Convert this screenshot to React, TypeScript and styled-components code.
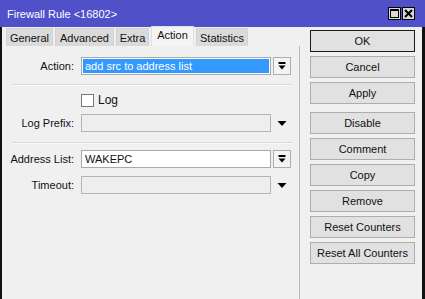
import styled, { createGlobalStyle } from "styled-components";

const GlobalStyle = createGlobalStyle`
  html, body {
    margin: 0;
    padding: 0;
    background: #f0f0f0;
  }
  body {
    font-family: "Liberation Sans", Arial, sans-serif;
    font-size: 11px;
    color: #111;
  }
`;

const tabs = [
  { name: "General", w: 47 },
  { name: "Advanced", w: 59 },
  { name: "Extra", w: 33 },
  { name: "Action", w: 43, active: true },
  { name: "Statistics", w: 52 },
];

const buttons = [
  { label: "OK", primary: true },
  { label: "Cancel" },
  { label: "Apply", groupEnd: true },
  { label: "Disable" },
  { label: "Comment" },
  { label: "Copy" },
  { label: "Remove" },
  { label: "Reset Counters" },
  { label: "Reset All Counters" },
];

function BarArrow() {
  return (
    <svg width="8" height="8" viewBox="0 0 8 8">
      <rect x="0.5" y="0" width="7" height="2" fill="#000" />
      <polygon points="0.5,3.5 7.5,3.5 4,7.5" fill="#000" />
    </svg>
  );
}

function DownArrow() {
  return (
    <svg width="10" height="5" viewBox="0 0 10 5">
      <polygon points="0.5,0 9.5,0 5,5" fill="#000" />
    </svg>
  );
}

function App() {
  return (
    <>
      <GlobalStyle />
      <Window>
        <TitleBar>
          <Title>Firewall Rule &lt;16802&gt;</Title>
          <Controls>
            <ControlBox>
              <svg width="9" height="9" viewBox="0 0 9 9">
                <rect x="0.5" y="0.5" width="8" height="8" fill="none" stroke="#000" />
                <rect x="0" y="0" width="9" height="2" fill="#000" />
              </svg>
            </ControlBox>
            <ControlBox>
              <svg width="9" height="9" viewBox="0 0 9 9">
                <path d="M1 1 L8 8 M8 1 L1 8" stroke="#000" strokeWidth="2" />
              </svg>
            </ControlBox>
          </Controls>
        </TitleBar>
        <Body>
          <Main>
            <TabStrip>
              {tabs.map((t) => (
                <Tab key={t.name} $w={t.w} $active={!!t.active}>
                  {t.name}
                </Tab>
              ))}
            </TabStrip>
            <Pane>
              <Row $mt={0}>
                <Label>Action:</Label>
                <Field $kind="selected">add src to address list</Field>
                <DropButton>
                  <BarArrow />
                </DropButton>
              </Row>
              <Separator $mt={9} />
              <Row $mt={5}>
                <Label />
                <Checkbox />
                <CheckText>Log</CheckText>
              </Row>
              <Row $mt={5}>
                <Label>Log Prefix:</Label>
                <Field $kind="disabled" />
                <ArrowSlot>
                  <DownArrow />
                </ArrowSlot>
              </Row>
              <Separator $mt={10} />
              <Row $mt={6}>
                <Label>Address List:</Label>
                <Field $kind="normal">WAKEPC</Field>
                <DropButton>
                  <BarArrow />
                </DropButton>
              </Row>
              <Row $mt={8}>
                <Label>Timeout:</Label>
                <Field $kind="disabled" />
                <ArrowSlot>
                  <DownArrow />
                </ArrowSlot>
              </Row>
            </Pane>
          </Main>
          <ButtonColumn>
            {buttons.map((b) => (
              <Button key={b.label} $primary={!!b.primary} $gapAfter={b.groupEnd ? 8 : 4}>
                {b.label}
              </Button>
            ))}
          </ButtonColumn>
        </Body>
      </Window>
    </>
  );
}

export default App;

const Window = styled.div`
  width: 425px;
  height: 299px;
  display: flex;
  flex-direction: column;
  overflow: hidden;
`;

const TitleBar = styled.div`
  height: 27px;
  flex-shrink: 0;
  background: #5050c8;
  display: flex;
  align-items: center;
  justify-content: space-between;
  padding: 0 10px 0 7px;
`;

const Title = styled.span`
  color: #fff;
  font-size: 11px;
`;

const Controls = styled.div`
  display: flex;
  gap: 1px;
`;

const ControlBox = styled.div`
  width: 13px;
  height: 13px;
  box-sizing: border-box;
  border: 1px solid #000;
  background: #d8d8d8;
  display: flex;
  align-items: center;
  justify-content: center;
`;

const Body = styled.div`
  flex: 1;
  display: flex;
  border-left: 2px solid #111;
  border-right: 3px solid #111;
  background: #f0f0f0;
`;

const Main = styled.div`
  width: 298px;
  display: flex;
  flex-direction: column;
`;

const TabStrip = styled.div`
  height: 19px;
  display: flex;
  align-items: flex-end;
  gap: 2px;
  padding-left: 4px;
`;

const Tab = styled.div<{ $w: number; $active: boolean }>`
  width: ${(p) => p.$w}px;
  height: ${(p) => (p.$active ? 20 : 18)}px;
  box-sizing: border-box;
  display: flex;
  align-items: center;
  justify-content: center;
  background: ${(p) => (p.$active ? "#f4f4f4" : "#dadada")};
  border: 1px solid ${(p) => (p.$active ? "#e0e0e0" : "#d2d2d2")};
  border-bottom: none;
  padding-bottom: ${(p) => (p.$active ? 3 : 0)}px;
`;

const Pane = styled.div`
  flex: 1;
  margin-left: 2px;
  border-right: 1px solid #b8b8b8;
  display: flex;
  flex-direction: column;
  padding-top: 11px;
`;

const Row = styled.div<{ $mt: number }>`
  height: 18px;
  margin-top: ${(p) => p.$mt}px;
  display: flex;
  align-items: center;
`;

const Label = styled.div`
  width: 70px;
  margin-right: 7px;
  text-align: right;
  white-space: nowrap;
`;

const Field = styled.div<{ $kind: "selected" | "normal" | "disabled" }>`
  width: 190px;
  height: 18px;
  box-sizing: border-box;
  padding: 0 3px;
  display: flex;
  align-items: center;
  border: 1px solid ${(p) => (p.$kind === "disabled" ? "#b4b4b4" : "#a9a9a9")};
  background: ${(p) =>
    p.$kind === "selected" ? "#3399ff" : p.$kind === "normal" ? "#fff" : "#eeeeee"};
  color: ${(p) => (p.$kind === "selected" ? "#fff" : "#111")};
  white-space: nowrap;
  box-shadow: ${(p) => (p.$kind === "selected" ? "inset 0 0 0 1px #fff" : "none")};
`;

const DropButton = styled.div`
  width: 18px;
  height: 18px;
  margin-left: 2px;
  box-sizing: border-box;
  border: 1px solid #adadad;
  background: #f4f4f4;
  display: flex;
  align-items: center;
  justify-content: center;
`;

const ArrowSlot = styled.div`
  width: 18px;
  height: 18px;
  margin-left: 2px;
  display: flex;
  align-items: center;
  justify-content: center;
`;

const Separator = styled.div<{ $mt: number }>`
  height: 1px;
  margin: ${(p) => p.$mt}px 6px 0 8px;
  background: #dadada;
  border-bottom: 1px solid #fafafa;
`;

const Checkbox = styled.div`
  width: 13px;
  height: 13px;
  box-sizing: border-box;
  border: 1px solid #7a7a7a;
  background: #fff;
`;

const CheckText = styled.span`
  margin-left: 4px;
  font-size: 12px;
`;

const ButtonColumn = styled.div`
  flex: 1;
  display: flex;
  flex-direction: column;
  padding: 3px 0 0 10px;
`;

const Button = styled.div<{ $primary: boolean; $gapAfter: number }>`
  width: 105px;
  height: 22px;
  box-sizing: border-box;
  margin-bottom: ${(p) => p.$gapAfter}px;
  border: 1px solid ${(p) => (p.$primary ? "#1a1a1a" : "#adadad")};
  background: #e1e1e1;
  display: flex;
  align-items: center;
  justify-content: center;
  white-space: nowrap;
`;
